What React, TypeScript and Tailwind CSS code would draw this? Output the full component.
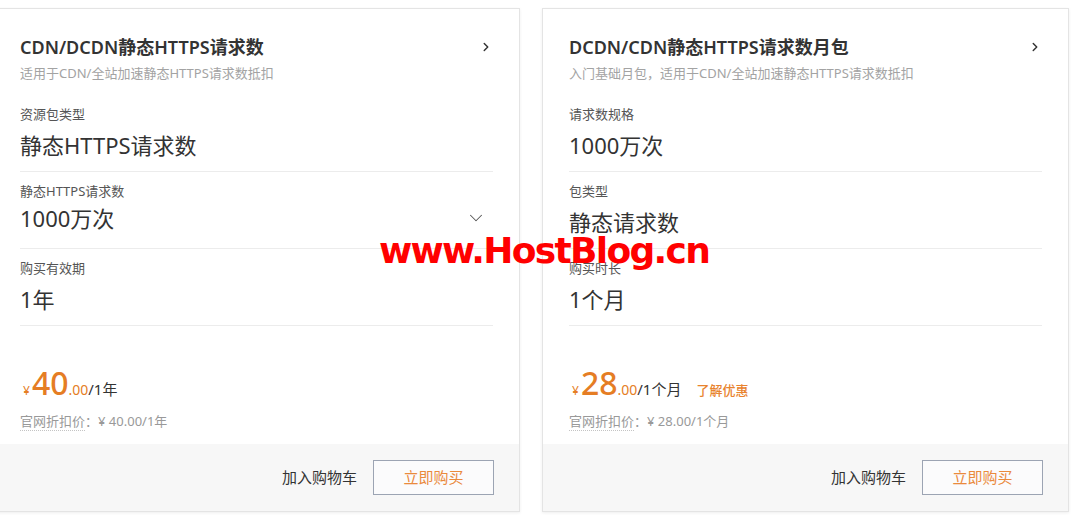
import { ChevronDown, ChevronRight } from "lucide-react";

type Field = {
  label: string;
  value: string;
  select?: boolean;
};

type Pack = {
  title: string;
  desc: string;
  fields: Field[];
  price: string;
  unit: string;
  promo?: boolean;
};

const packs: Pack[] = [
  {
    title: "CDN/DCDN静态HTTPS请求数",
    desc: "适用于CDN/全站加速静态HTTPS请求数抵扣",
    fields: [
      { label: "资源包类型", value: "静态HTTPS请求数" },
      { label: "静态HTTPS请求数", value: "1000万次", select: true },
      { label: "购买有效期", value: "1年" },
    ],
    price: "40",
    unit: "1年",
  },
  {
    title: "DCDN/CDN静态HTTPS请求数月包",
    desc: "入门基础月包，适用于CDN/全站加速静态HTTPS请求数抵扣",
    fields: [
      { label: "请求数规格", value: "1000万次" },
      { label: "包类型", value: "静态请求数" },
      { label: "购买时长", value: "1个月" },
    ],
    price: "28",
    unit: "1个月",
    promo: true,
  },
];

const PackCard = ({ pack }: { pack: Pack }) => {
  return (
    <div className="flex h-[504px] w-[527px] shrink-0 flex-col border border-[#e4e4e4] bg-white shadow-[0_1px_3px_rgba(0,0,0,0.07)]">
      <div className="flex-1 pl-[26px] pr-[26px] pt-[26px]">
        <div className="flex h-[24px] items-center justify-between">
          <h3 className="text-[18px] font-semibold leading-[24px] text-[#333]">
            {pack.title}
          </h3>
          <ChevronRight size={14} strokeWidth={2.5} className="text-[#333]" />
        </div>
        <p className="mt-[5px] text-[13px] leading-[18px] text-[#a3a3a3]">
          {pack.desc}
        </p>

        <div className="mt-[13px]">
          {pack.fields.map((f) => (
            <div key={f.label} className="h-[77px] border-b border-[#ececec] pt-[10px]">
              <div className="text-[13px] leading-[18px] text-[#555]">{f.label}</div>
              <div
                className={
                  f.select
                    ? "mt-[4px] flex items-center justify-between pr-[6px]"
                    : "mt-[8px] flex items-center justify-between"
                }
              >
                <span className="text-[22px] leading-[28px] text-[#333]">{f.value}</span>
                {f.select && (
                  <ChevronDown size={22} strokeWidth={1.1} className="text-[#555]" />
                )}
              </div>
            </div>
          ))}
        </div>

        <div className="mt-[39px] flex items-baseline leading-[36px]">
          <span className="ml-[3px] mr-[2px] text-[12px] text-[#e57d24]">¥</span>
          <span className="text-[32px] font-medium text-[#e57d24]">{pack.price}</span>
          <span className="text-[14px] text-[#e57d24]">.00</span>
          <span className="text-[15px] text-[#333]">/{pack.unit}</span>
          {pack.promo && (
            <span className="ml-[15px] text-[13px] font-medium text-[#e8832e]">了解优惠</span>
          )}
        </div>
        <div className="mt-[3px] text-[13px] leading-[18px] text-[#999]">
          <span className="border-b border-dotted border-[#c4c4c4]">官网折扣价</span>
          <span>：¥ {pack.price}.00/{pack.unit}</span>
        </div>
      </div>

      <div className="flex h-[67px] items-center justify-end bg-[#f7f7f7] pr-[25px]">
        <span className="mr-[16px] text-[15px] text-[#333]">加入购物车</span>
        <button className="h-[35px] w-[121px] border border-[#9ca4b3] bg-[#fbfbfc] text-[15px] text-[#ea8a3c]">
          立即购买
        </button>
      </div>
    </div>
  );
};

export default function App() {
  return (
    <div
      className="relative h-[528px] w-[1080px] overflow-hidden bg-white"
      style={{ fontFamily: '"Noto Sans", "Noto Sans CJK SC", sans-serif' }}
    >
      <div className="ml-[-7px] flex gap-[22px] pt-[8px]">
        {packs.map((p) => (
          <PackCard key={p.title} pack={p} />
        ))}
      </div>

      <div
        className="absolute left-[379px] top-[229px] text-[36px] font-bold leading-[44px] tracking-[-1.7px] text-[#ff0000]"
        style={{ fontFamily: '"DejaVu Sans", sans-serif' }}
      >
        www.HostBlog.cn
      </div>
    </div>
  );
}
